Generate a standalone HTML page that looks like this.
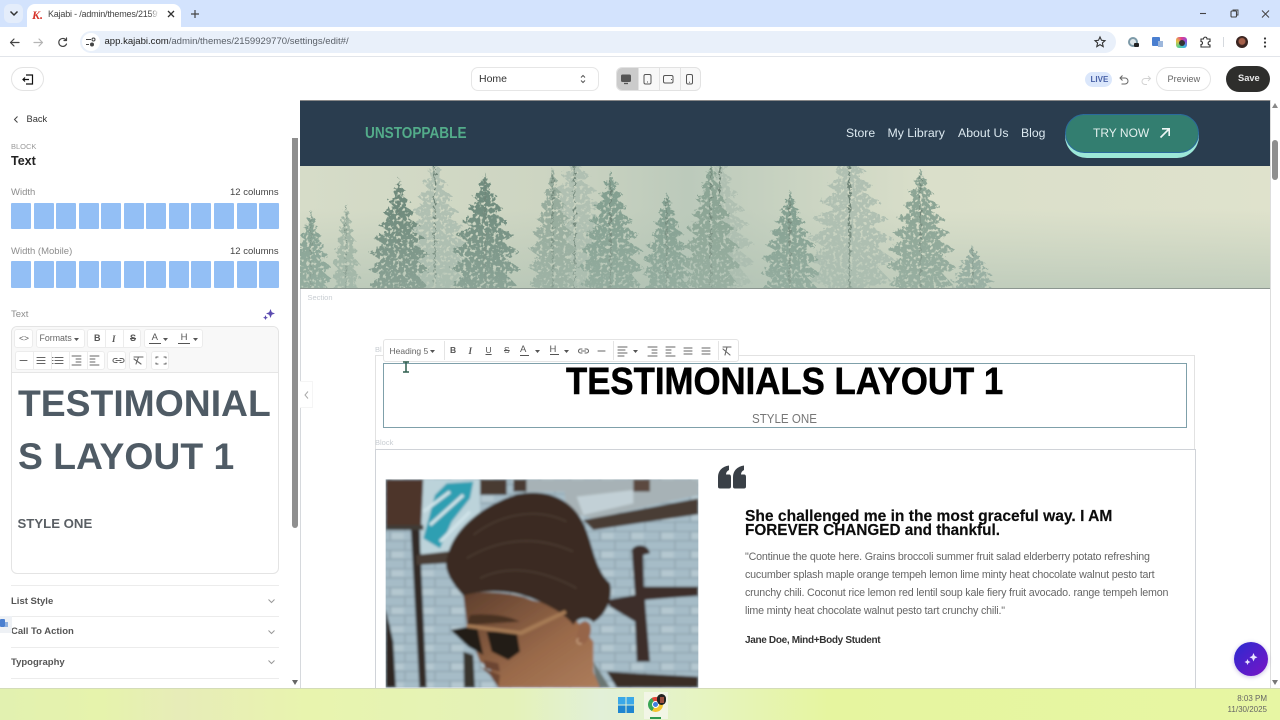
<!DOCTYPE html>
<html><head><meta charset="utf-8"><title>Kajabi</title>
<style>
*{box-sizing:border-box;margin:0;padding:0}
html,body{width:1280px;height:720px;overflow:hidden;background:#fff;font-family:"Liberation Sans",sans-serif}
#r{position:relative;width:1280px;height:720px;overflow:hidden;filter:blur(.25px)}
.a{position:absolute}
.t{position:absolute;white-space:nowrap;line-height:1}
.c{position:absolute;background:#93bff5;border-radius:1px;width:20px;height:26px}
.btn{position:absolute;background:#fff;border:1px solid #ececec;border-radius:3px}
svg{position:absolute;overflow:visible}
.ic{fill:none;stroke:#666;stroke-width:1.1;stroke-linecap:round;stroke-linejoin:round}
.q{left:745px;font-size:10.700px;letter-spacing:-.18px;color:#666}
</style></head><body><div id="r">

<!-- Chrome tab strip -->
<div class="a" style="left:0;top:0;width:1280px;height:27px;background:#d3e3fd"></div>
<div class="a" style="left:4px;top:4px;width:19px;height:19px;border-radius:6px;background:#e4edfb"></div>
<svg style="left:9px;top:10px" width="10" height="7"><path d="M1.5 1.5L5 5L8.5 1.5" fill="none" stroke="#333" stroke-width="1.5"/></svg>
<div class="a" style="left:27px;top:4px;width:154px;height:24px;background:#fff;border-radius:8px 8px 0 0"></div>
<div class="t" style="left:32px;top:8px;font:italic bold 12px 'Liberation Serif',serif;color:#d6332a">K.</div>
<div class="t" style="left:48px;top:9.500px;width:110px;overflow:hidden;font-size:9px;letter-spacing:-.2px;color:#444">Kajabi - /admin/themes/215992</div>
<div class="a" style="left:150px;top:6px;width:9px;height:18px;background:linear-gradient(90deg,rgba(255,255,255,0),#fff)"></div>
<svg style="left:167px;top:10px" width="8" height="8"><path d="M1 1L7 7M7 1L1 7" stroke="#333" stroke-width="1.3"/></svg>
<svg style="left:190px;top:9px" width="10" height="10"><path d="M5 1V9M1 5H9" stroke="#444" stroke-width="1.2"/></svg>
<svg style="left:1199px;top:9px" width="70" height="10"><path d="M1 4.500H7" stroke="#444" stroke-width="1.1"/><rect x="32" y="2" width="5.500" height="6" rx="1" fill="none" stroke="#444" stroke-width="1.1"/><path d="M34 2V1H39V6H37.500" fill="none" stroke="#444" stroke-width=".9"/><path d="M63 1.500L70 8.500M70 1.500L63 8.500" stroke="#444" stroke-width="1"/></svg>

<!-- Toolbar -->
<div class="a" style="left:0;top:27px;width:1280px;height:30px;background:#fff;border-bottom:1px solid #e2e5ea"></div>
<svg style="left:9px;top:37px" width="62" height="11" fill="none" stroke-linecap="round" stroke-linejoin="round"><path d="M10 5.500H1.500M5 2L1.500 5.500L5 9" stroke="#444" stroke-width="1.2"/><path d="M25 5.500H33.500M30 2L33.500 5.500L30 9" stroke="#b5b5b5" stroke-width="1.2"/><path d="M57 3A4 4 0 1 0 57.500 7M57.500 1V3.500H55" stroke="#444" stroke-width="1.2"/></svg>
<div class="a" style="left:80px;top:31px;width:1036px;height:22px;border-radius:11px;background:#e9f0fa"></div>
<div class="a" style="left:82px;top:33px;width:18px;height:18px;border-radius:9px;background:#fff"></div>
<svg style="left:86px;top:37px" width="11" height="10" fill="none" stroke="#444" stroke-width="1"><path d="M0 2.500H5M0 7.500H3"/><circle cx="7.500" cy="2.500" r="1.500"/><circle cx="6" cy="7.500" r="1.500" fill="#444"/></svg>
<div class="t" style="left:104.500px;top:37px;font-size:9.550px;color:#5a6068"><span style="color:#222">app.kajabi.com</span>/admin/themes/2159929770/settings/edit#/</div>
<svg style="left:1094px;top:36px" width="12" height="12"><path d="M6 1L7.500 4.300L11 4.700L8.400 7L9.200 10.600L6 8.700L2.800 10.600L3.600 7L1 4.700L4.500 4.300Z" fill="none" stroke="#333" stroke-width="1.100"/></svg>
<div class="a" style="left:1128px;top:37px;width:10px;height:10px;border-radius:5px;border:2px solid #7d9aa8;background:#dfe7ea"></div>
<div class="a" style="left:1134px;top:43px;width:5px;height:4px;background:#222;border-radius:1px"></div>
<div class="a" style="left:1152px;top:37px;width:8px;height:9px;background:#4a7fd0;border-radius:1px"></div>
<div class="a" style="left:1158px;top:41px;width:5px;height:6px;background:#9db7dc"></div>
<div class="a" style="left:1176px;top:37px;width:11px;height:11px;border-radius:3px;background:conic-gradient(#e23b8f,#8b4fd8,#3fb6e0,#5fd08a,#e8c13f,#e23b8f)"></div>
<div class="a" style="left:1178.500px;top:39.500px;width:6px;height:6px;border-radius:3px;background:#333"></div>
<svg style="left:1200px;top:36px" width="11" height="12"><path d="M1 3H3.500C3.500 .5 7 .5 7 3H10V5.500C7.500 5.500 7.500 9 10 9V11H1V8.500C3 8.500 3 5.500 1 5.500Z" fill="none" stroke="#333" stroke-width="1.100"/></svg>
<div class="a" style="left:1223px;top:37px;width:1px;height:10px;background:#d5d9de"></div>
<div class="a" style="left:1236px;top:36px;width:12px;height:12px;border-radius:6px;background:radial-gradient(circle at 50% 45%,#a5604a 0 32%,#3a2420 45%)"></div>
<svg style="left:1263px;top:37px" width="4" height="11" fill="#333"><circle cx="2" cy="1.500" r="1.100"/><circle cx="2" cy="5.500" r="1.100"/><circle cx="2" cy="9.500" r="1.100"/></svg>

<!-- Editor top bar -->
<div class="a" style="left:11px;top:67px;width:33px;height:24px;border-radius:12px;border:1px solid #e3e3e3;background:#fff"></div>
<svg style="left:22px;top:74px" width="12" height="11" fill="none" stroke="#111" stroke-width="1.200"><path d="M4 1H10.500V10H4M7 5.500H1M3 3.500L1 5.500L3 7.500"/></svg>
<div class="a" style="left:471px;top:67px;width:128px;height:24px;border-radius:7px;border:1px solid #e6e6e6;background:#fff"></div>
<div class="t" style="left:479px;top:73.500px;font-size:10.500px;color:#333">Home</div>
<svg style="left:580px;top:74px" width="6" height="10" fill="none" stroke="#555"><path d="M1 3.500L3 1.500L5 3.500M1 6.500L3 8.500L5 6.500"/></svg>
<div class="a" style="left:616px;top:67px;width:85px;height:24px;border-radius:6px;border:1px solid #e2e2e2;background:#f8f8f8;overflow:hidden">
<div class="a" style="left:0;top:0;width:21px;height:24px;background:#cbcbcb"></div>
<div class="a" style="left:42px;top:0;width:1px;height:24px;background:#e2e2e2"></div>
<div class="a" style="left:21px;top:0;width:1px;height:24px;background:#e2e2e2"></div>
<div class="a" style="left:63px;top:0;width:1px;height:24px;background:#e2e2e2"></div>
</div>
<svg style="left:621px;top:74px" width="74" height="11" fill="none" stroke="#555" stroke-width="1"><rect x=".5" y="1" width="9" height="6.500" rx="1" fill="#555"/><path d="M3 9.500H7" stroke-width="1.300"/><rect x="23" y=".5" width="7" height="9.500" rx="1.500"/><path d="M26 8H27"/><rect x="42.500" y="1.500" width="9.500" height="7.500" rx="1.500"/><path d="M50.500 5V6"/><rect x="65.500" y=".5" width="6" height="9.500" rx="1.500"/><path d="M68 8.300H69"/></svg>
<div class="a" style="left:1085px;top:72px;width:27px;height:15px;border-radius:7.500px;background:#dbe7fb"></div>
<div class="t" style="left:1090.500px;top:75.500px;font-size:8px;font-weight:bold;color:#4a62a8">LIVE</div>
<svg style="left:1119px;top:74px" width="32" height="11" fill="none" stroke-width="1"><path d="M3.500 1.500L1 4L3.500 6.500M1 4H6A3 3 0 0 1 6 10H2.500" stroke="#666"/><path d="M29 2L31.500 4.500L29 7M31.500 4.500H26A3 3 0 0 0 26 10.500H28" stroke="#d3d3d3"/></svg>
<div class="a" style="left:1156px;top:67px;width:55px;height:24px;border-radius:12px;border:1px solid #e4e4e4;background:#fff"></div>
<div class="t" style="left:1167.500px;top:74.500px;font-size:9.200px;color:#666">Preview</div>
<div class="a" style="left:1226px;top:66px;width:44px;height:26px;border-radius:13px;background:#2e2e2c"></div>
<div class="t" style="left:1238px;top:74px;font-size:9.300px;font-weight:bold;color:#e8e8e8">Save</div>

<!-- Left panel -->
<svg style="left:12.500px;top:115px" width="6" height="9"><path d="M4.500 1.500L1.500 4.500L4.500 7.500" fill="none" stroke="#444" stroke-width="1"/></svg>
<div class="t" style="left:26.500px;top:114.500px;font-size:9.300px;color:#333">Back</div>
<div class="t" style="left:11px;top:142.500px;font-size:7.500px;color:#9a9a9a">BLOCK</div>
<div class="t" style="left:11px;top:155px;font-size:12.500px;font-weight:bold;color:#222">Text</div>
<div class="t" style="left:11px;top:188px;font-size:9.500px;color:#8d8d8d">Width</div>
<div class="t" style="left:230px;top:188px;font-size:9.500px;color:#444">12 columns</div>
<div class="t" style="left:11px;top:247px;font-size:9.500px;color:#8d8d8d">Width (Mobile)</div>
<div class="t" style="left:230px;top:247px;font-size:9.500px;color:#444">12 columns</div>
<div class="c" style="left:11px;top:203px"></div><div class="c" style="left:33.600px;top:203px"></div><div class="c" style="left:56.200px;top:203px"></div><div class="c" style="left:78.800px;top:203px"></div><div class="c" style="left:101.400px;top:203px"></div><div class="c" style="left:124px;top:203px"></div><div class="c" style="left:146px;top:203px"></div><div class="c" style="left:168.700px;top:203px"></div><div class="c" style="left:191.300px;top:203px"></div><div class="c" style="left:214px;top:203px"></div><div class="c" style="left:236.700px;top:203px"></div><div class="c" style="left:259.300px;top:203px"></div>
<div class="c" style="left:11px;top:261px;height:27px"></div><div class="c" style="left:33.600px;top:261px;height:27px"></div><div class="c" style="left:56.200px;top:261px;height:27px"></div><div class="c" style="left:78.800px;top:261px;height:27px"></div><div class="c" style="left:101.400px;top:261px;height:27px"></div><div class="c" style="left:124px;top:261px;height:27px"></div><div class="c" style="left:146px;top:261px;height:27px"></div><div class="c" style="left:168.700px;top:261px;height:27px"></div><div class="c" style="left:191.300px;top:261px;height:27px"></div><div class="c" style="left:214px;top:261px;height:27px"></div><div class="c" style="left:236.700px;top:261px;height:27px"></div><div class="c" style="left:259.300px;top:261px;height:27px"></div>

<div class="t" style="left:11px;top:310px;font-size:9.500px;color:#8d8d8d">Text</div>
<svg style="left:263px;top:309px" width="12" height="12" fill="#5b4bb0"><path d="M7.500 0L8.800 3.200L12 4.500L8.800 5.800L7.500 9L6.200 5.800L3 4.500L6.200 3.200Z"/><path d="M2.500 6L3.300 8L5 8.700L3.300 9.400L2.500 11L1.700 9.400L0 8.700L1.700 8Z"/></svg>

<div class="a" style="left:11px;top:326px;width:268px;height:248px;border:1px solid #e4e4e4;border-radius:6px;background:#fff"></div>
<div class="a" style="left:12px;top:327px;width:266px;height:46px;background:#f8f8f8;border-bottom:1px solid #e6e6e6;border-radius:5px 5px 0 0"></div>
<div class="btn" style="left:14px;top:329px;width:19px;height:19px"></div>
<div class="btn" style="left:35.500px;top:329px;width:49px;height:19px"></div>
<div class="btn" style="left:87px;top:329px;width:54px;height:19px"></div>
<div class="btn" style="left:144px;top:329px;width:59px;height:19px"></div>
<div class="btn" style="left:14.500px;top:351px;width:90px;height:19px"></div>
<div class="btn" style="left:107px;top:351px;width:19px;height:19px"></div>
<div class="btn" style="left:129px;top:351px;width:18px;height:19px"></div>
<div class="btn" style="left:150.500px;top:351px;width:18px;height:19px"></div>
<div class="t" style="left:19px;top:334px;font-size:8.500px;color:#555">&lt;&gt;</div>
<div class="t" style="left:39.500px;top:334px;font-size:8.800px;color:#666">Formats</div>
<svg style="left:74px;top:338px" width="5" height="3"><path d="M0 0H5L2.500 3Z" fill="#555"/></svg>
<div class="t" style="left:94px;top:334px;font-size:9px;font-weight:bold;color:#555">B</div>
<div class="t" style="left:112px;top:334px;font:italic bold 9px 'Liberation Serif',serif;color:#555">I</div>
<div class="t" style="left:130px;top:334px;font-size:9px;font-weight:bold;color:#555;text-decoration:line-through">S</div>
<div class="a" style="left:105px;top:329px;width:1px;height:19px;background:#ececec"></div>
<div class="a" style="left:123px;top:329px;width:1px;height:19px;background:#ececec"></div>
<div class="t" style="left:149px;top:333px;font-size:9.500px;color:#555;border-bottom:1.500px solid #555">&nbsp;A&nbsp;</div>
<svg style="left:163px;top:338px" width="5" height="3"><path d="M0 0H5L2.500 3Z" fill="#555"/></svg>
<div class="t" style="left:178px;top:333px;font-size:9.500px;color:#555;border-bottom:1.500px solid #555">&nbsp;H&nbsp;</div>
<svg style="left:193px;top:338px" width="5" height="3"><path d="M0 0H5L2.500 3Z" fill="#555"/></svg>
<div class="a" style="left:33px;top:351px;width:1px;height:19px;background:#ececec"></div>
<div class="a" style="left:51px;top:351px;width:1px;height:19px;background:#ececec"></div>
<div class="a" style="left:69px;top:351px;width:1px;height:19px;background:#ececec"></div>
<div class="a" style="left:87px;top:351px;width:1px;height:19px;background:#ececec"></div>
<svg style="left:14px;top:351px" width="156" height="19" class="ic"><path d="M6 9.500H13"/><path d="M23 6.500H31M23 9.500H31M23 12.500H31M41 6.500H49M41 9.500H49M41 12.500H49M38.500 6.500H39M38.500 9.500H39M38.500 12.500H39"/><path d="M58 5H67M62 8H67M62 11H67M58 14H67M76 5H85M76 8H81M76 11H81M76 14H85" stroke-width=".9"/><path d="M99 9.500A2 2 0 0 1 101 7.500H103M108 7.500H106M108 11.500H106M103 11.500H101A2 2 0 0 1 99 9.500M108 7.500A2 2 0 0 1 108 11.500M102 9.500H107"/><path d="M120 6H129M124.500 6L122 13M120 8L127 13"/><path d="M142 7V6H144M150 6H152V7M142 12V13H144M150 13H152V12"/></svg>

<div class="t" style="left:18px;top:385.400px;font-size:37.300px;font-weight:bold;color:#4f5b65">TESTIMONIAL</div>
<div class="t" style="left:18px;top:438.400px;font-size:37.300px;font-weight:bold;color:#4f5b65">S LAYOUT 1</div>
<div class="t" style="left:17.500px;top:516.800px;font-size:13.200px;font-weight:bold;color:#5a5f64">STYLE ONE</div>

<div class="a" style="left:11px;top:585px;width:268px;height:1px;background:#ececec"></div>
<div class="a" style="left:11px;top:616px;width:268px;height:1px;background:#ececec"></div>
<div class="a" style="left:11px;top:647px;width:268px;height:1px;background:#ececec"></div>
<div class="a" style="left:11px;top:678px;width:268px;height:1px;background:#ececec"></div>
<div class="t" style="left:11px;top:596.500px;font-size:9.500px;font-weight:bold;color:#555">List Style</div>
<div class="t" style="left:11px;top:627px;font-size:9.500px;font-weight:bold;color:#555">Call To Action</div>
<div class="t" style="left:11px;top:658px;font-size:9.500px;font-weight:bold;color:#555">Typography</div>
<svg style="left:268px;top:599px" width="7" height="64" fill="none" stroke="#999" stroke-width="1"><path d="M.5 .5L3.500 3.500L6.500 .5M.5 31.500L3.500 34.500L6.500 31.500M.5 61.500L3.500 64.500L6.500 61.500"/></svg>
<div class="a" style="left:0;top:616px;width:12px;height:17px;background:#eef1f5"></div>
<div class="a" style="left:0;top:619px;width:5px;height:8px;background:#4a7fd0;border-radius:1px"></div>
<div class="a" style="left:5px;top:622px;width:3px;height:5px;background:#8fb0de"></div>

<div class="a" style="left:292px;top:138px;width:6px;height:390px;background:#8f8f8f;border-radius:0 0 3px 3px"></div>
<svg style="left:292px;top:680px" width="6" height="5"><path d="M0 0H6L3 5Z" fill="#666"/></svg>
<div class="a" style="left:300px;top:100px;width:1px;height:588px;background:#d6d9dd"></div>

<!-- Site nav -->
<div class="a" style="left:300px;top:101px;width:970px;height:65px;background:#2a3d4f"></div>
<div class="a" style="left:300px;top:100px;width:970px;height:1px;background:#888"></div>
<div class="t" style="left:365px;top:125.500px;font-size:16px;font-weight:bold;color:#53ac8a;transform:scaleX(.85);transform-origin:0 0">UNSTOPPABLE</div>
<div class="t" style="left:846px;top:126.500px;font-size:12.200px;color:#dce9f0">Store</div>
<div class="t" style="left:887.500px;top:126.500px;font-size:12.300px;color:#dce9f0">My Library</div>
<div class="t" style="left:958px;top:126.500px;font-size:12.300px;color:#dce9f0">About Us</div>
<div class="t" style="left:1021px;top:126.500px;font-size:12.200px;color:#dce9f0">Blog</div>
<div class="a" style="left:1065px;top:114px;width:134px;height:44px;border-radius:22px;background:#9de8d8"></div>
<div class="a" style="left:1065px;top:114px;width:134px;height:39px;border-radius:20px;background:#337e70;border:1.500px solid #2a6a9c"></div>
<div class="t" style="left:1093px;top:127px;font-size:12px;color:#e4f0ee">TRY NOW</div>
<svg style="left:1159px;top:127px" width="12" height="12" fill="none" stroke="#edf6f4" stroke-width="1.600"><path d="M1.500 10.500L10 2M3 1.800H10.200V9"/></svg>

<!-- Forest hero -->
<svg style="left:300px;top:166px;overflow:hidden" width="970" height="123" viewBox="0 0 970 123">
<defs>
<linearGradient id="sky" x1="0" y1="0" x2="1" y2="0"><stop offset="0" stop-color="#d6dcc8"/><stop offset=".25" stop-color="#cdd5c2"/><stop offset=".4" stop-color="#bccabb"/><stop offset=".65" stop-color="#dadfca"/><stop offset="1" stop-color="#dfe2cc"/></linearGradient>
<linearGradient id="bot" x1="0" y1="0" x2="0" y2="1"><stop offset=".35" stop-color="#a9bdaf" stop-opacity="0"/><stop offset="1" stop-color="#a5baae" stop-opacity=".5"/></linearGradient>
<filter id="rg" x="-5%" y="-5%" width="110%" height="110%"><feTurbulence type="fractalNoise" baseFrequency=".3" numOctaves="2" seed="4" result="n"/><feDisplacementMap in="SourceGraphic" in2="n" scale="7" result="d"/><feColorMatrix in="n" type="matrix" values="0 0 0 0 0 0 0 0 0 0 0 0 0 0 0 7 0 0 0 -2.200" result="m"/><feComposite in="d" in2="m" operator="in"/></filter>
<symbol id="tr" viewBox="0 0 100 200" preserveAspectRatio="none"><path d="M50 0L53 14L60 18L55 28L68 36L59 44L76 54L64 62L84 74L68 82L92 94L74 104L98 118L78 128L100 144L80 152L96 170L72 176L84 200L16 200L28 176L4 170L20 152L0 144L22 128L2 118L26 104L8 94L32 82L16 74L36 62L24 54L41 44L32 36L45 28L40 18L47 14Z"/><rect x="48.500" y="10" width="2" height="190" fill="#6f8578"/></symbol>
</defs>
<rect width="970" height="123" fill="url(#sky)"/>
<g fill="#b0c0b2" filter="url(#rg)">
<use href="#tr" x="100" y="-10" width="70" height="150"/>
<use href="#tr" x="235" y="-20" width="80" height="160"/>
<use href="#tr" x="385" y="-15" width="70" height="155"/>
<use href="#tr" x="505" y="-25" width="90" height="165"/>
</g>
<g fill="#84a091" filter="url(#rg)">
<use href="#tr" x="-10" y="44" width="42" height="96"/>
<use href="#tr" x="32" y="36" width="28" height="104" fill="#a3b6a6"/>
<use href="#tr" x="68" y="12" width="62" height="128" fill="#6f8b7d"/>
<use href="#tr" x="150" y="6" width="70" height="134" fill="#718d7f"/>
<use href="#tr" x="228" y="2" width="50" height="138" fill="#97ac9d"/>
<use href="#tr" x="278" y="4" width="66" height="136"/>
<use href="#tr" x="342" y="26" width="50" height="114"/>
<use href="#tr" x="382" y="-6" width="58" height="146" fill="#8ca595"/>
<use href="#tr" x="460" y="24" width="60" height="116"/>
<use href="#tr" x="586" y="2" width="70" height="138" fill="#8ca595"/>
<use href="#tr" x="650" y="80" width="46" height="60" fill="#90a89b"/>
</g>
<rect width="970" height="123" fill="url(#bot)"/>
<rect y="122" width="970" height="1" fill="#8c9690"/>
</svg>

<div class="t" style="left:307.500px;top:293.500px;font-size:7.500px;color:#c8cdd2">Section</div>

<!-- Scrollbar right -->
<div class="a" style="left:1270px;top:100px;width:10px;height:588px;background:#fff;border-left:1px solid #ddd"></div>
<svg style="left:1272px;top:103px" width="6" height="5"><path d="M0 5H6L3 0Z" fill="#888"/></svg>
<div class="a" style="left:1272px;top:140px;width:6px;height:40px;background:#8f8f8f;border-radius:3px"></div>
<svg style="left:1272px;top:680px" width="6" height="5"><path d="M0 0H6L3 5Z" fill="#777"/></svg>

<!-- collapse tab -->
<div class="a" style="left:300px;top:381px;width:13px;height:27px;background:#fff;border:1px solid #f5f5f5;border-left:0"></div>
<svg style="left:304px;top:391px" width="5" height="8"><path d="M4 .5L1 4L4 7.500" fill="none" stroke="#aaa" stroke-width="1"/></svg>

<!-- blocks -->
<div class="a" style="left:375px;top:355px;width:820px;height:94px;border:1px solid #e2e2e2;border-bottom:0"></div>
<div class="t" style="left:375px;top:346px;font-size:7.500px;color:#c8cdd2">Bl</div>
<div class="a" style="left:383px;top:363px;width:804px;height:65px;border:1px solid #7fa0aa"></div>
<div class="t" style="left:375px;top:439px;font-size:7.500px;color:#c8cdd2">Block</div>
<div class="a" style="left:375px;top:449px;width:821px;height:239px;border:1px solid #d0d3d8;border-bottom:0"></div>

<div class="a" style="left:383px;top:339px;width:356px;height:23px;background:#fff;border:1px solid #e4e4e4;border-radius:3px"></div>
<div class="t" style="left:389.500px;top:346.500px;font-size:8.500px;color:#666">Heading 5</div>
<svg style="left:430px;top:349.500px" width="5" height="3"><path d="M0 0H5L2.500 3Z" fill="#555"/></svg>
<div class="a" style="left:444px;top:341px;width:1px;height:19px;background:#e4e4e4"></div>
<div class="a" style="left:613px;top:341px;width:1px;height:19px;background:#e4e4e4"></div>
<div class="a" style="left:718px;top:341px;width:1px;height:19px;background:#e4e4e4"></div>
<div class="t" style="left:450px;top:346px;font-size:8.500px;font-weight:bold;color:#555">B</div>
<div class="t" style="left:468.500px;top:346px;font:italic bold 9px 'Liberation Serif',serif;color:#555">I</div>
<div class="t" style="left:485.500px;top:346px;font-size:8.500px;color:#555;text-decoration:underline">U</div>
<div class="t" style="left:504px;top:346px;font-size:8.500px;color:#555;text-decoration:line-through">S</div>
<div class="t" style="left:520px;top:345px;font-size:9.500px;color:#555;border-bottom:1.200px solid #555">A&nbsp;</div>
<svg style="left:535px;top:350px" width="5" height="3"><path d="M0 0H5L2.500 3Z" fill="#555"/></svg>
<div class="t" style="left:549.500px;top:344.500px;font-size:9.500px;color:#555;border-bottom:1.200px solid #555">H&nbsp;</div>
<svg style="left:564px;top:350px" width="5" height="3"><path d="M0 0H5L2.500 3Z" fill="#555"/></svg>
<svg style="left:578px;top:343px" width="152" height="16" class="ic"><path d="M4 6H2.500A2 2 0 0 0 2.500 10H4M7 6H8.500A2 2 0 0 1 8.500 10H7M3.500 8H7.500"/><path d="M20 8H27"/><path d="M40 4H49M40 7H47M40 10H49M40 13H46"/><path d="M70 4H79M74 7H79M74 10H79M70 13H79M88 4H97M88 7H93M88 10H93M88 13H97"/><path d="M106 5H114M106 8H114M106 11H114M124 5H132M124 8H132M124 11H132"/><path d="M145 4H153M149 4L147 12M145 6L152 12"/></svg>
<svg style="left:633px;top:350px" width="5" height="3"><path d="M0 0H5L2.500 3Z" fill="#555"/></svg>

<svg style="left:402px;top:361px" width="8" height="12" fill="none" stroke="#2f5e4e" stroke-width="1.500"><path d="M1 1H7M4 1V11M1 11H7"/></svg>

<div class="t" style="left:566px;top:363.300px;font-size:38px;font-weight:bold;color:#000;-webkit-text-stroke:.5px #000;transform:scaleX(.915);transform-origin:0 0">TESTIMONIALS LAYOUT 1</div>
<div class="t" style="left:752px;top:412px;font-size:13px;color:#777;transform:scaleX(.89);transform-origin:0 0">STYLE ONE</div>

<!-- Photo -->
<svg style="left:380px;top:475px" width="330" height="215" viewBox="0 0 990 645">
<defs>
<clipPath id="ph"><rect x="17" y="13" width="938" height="625"/></clipPath>
<pattern id="bk" width="90" height="56" patternUnits="userSpaceOnUse"><rect width="90" height="56" fill="#a6bcc7"/><path d="M0 1H90M0 29H90M30 1V29M75 29V56" stroke="#6c808a" stroke-width="3" opacity=".55"/><rect x="35" y="6" width="36" height="18" fill="#bccdd5" opacity=".7"/></pattern>
<linearGradient id="sk" x1="0" y1="0" x2="1" y2="1"><stop offset="0" stop-color="#5f3f2d"/><stop offset=".6" stop-color="#9a6a4a"/><stop offset="1" stop-color="#ad7d5c"/></linearGradient>
<filter id="b2" x="-5%" y="-5%" width="110%" height="110%"><feGaussianBlur stdDeviation="4"/></filter>
</defs>
<g clip-path="url(#ph)"><g filter="url(#b2)">
<rect x="0" y="0" width="990" height="645" fill="url(#bk)"/>
<path d="M17 13H130V150H17Z" fill="#4e342c"/>
<path d="M130 13H300V180L210 235L120 235Z" fill="#bcd3da"/>
<path d="M130 190L165 60L200 25L280 20L270 70L215 140L180 220Z" fill="#2f9fb2"/>
<path d="M150 150L250 60M130 110L210 50M180 200L270 110" stroke="#cfe3e8" stroke-width="10"/>
<path d="M300 13H380V60H300ZM400 13H440V50H400Z" fill="#4a3a32"/>
<path d="M440 13H560V50H440ZM550 13H955V60L640 130L560 110Z" fill="#a7b2b6"/>
<path d="M590 65L760 45L760 85L610 120Z" fill="#c2d0d6"/>
<path d="M760 13H810V50H760Z" fill="#5c4a40"/>
<path d="M610 135L955 70V118L640 165Z" fill="#4a3c34"/>
<path d="M92 150L118 150L140 638H118Z" fill="#332a26"/>
<path d="M17 150H130V165H17Z" fill="#3f3a36"/>
<path d="M110 240L240 225V262L110 270Z" fill="#4a3c34"/>
<path d="M17 400L40 500L48 638H17Z" fill="#2d2724"/>
<path d="M250 530L280 540L285 638H252Z" fill="#39342f"/>
<path d="M755 225C765 205 805 205 810 235L790 240L792 335L955 335V362L795 375L810 560L770 560L765 440L690 395L680 375L765 360Z" fill="#3c2f2a"/>
<path d="M680 590L955 605V638H710Z" fill="#3a2d28"/>
<path d="M640 560L690 638H650Z" fill="#6b7472"/>
<path d="M250 360C300 345 400 350 455 375L560 400L640 500L640 590L660 638H355L330 580L300 560L262 460Z" fill="url(#sk)"/>
<path d="M300 575L360 600L355 638L330 600Z" fill="#6e4630"/>
<path d="M600 445C620 430 640 445 630 480C620 510 600 515 585 500Z" fill="#96654a"/>
<path d="M198 270C205 170 300 95 410 58C510 38 575 80 605 135C640 200 640 280 690 325C700 365 680 420 640 442C620 420 590 430 580 450C560 420 500 385 440 365C380 345 310 345 250 362C225 335 200 300 198 270Z" fill="#3b2b24"/>
<path d="M280 180C370 110 480 100 560 140M260 250C360 190 470 180 580 230M300 310C380 270 480 280 590 340" stroke="#4c3a30" stroke-width="5" fill="none"/>
<path d="M270 420C320 415 380 420 420 440L260 450Z" fill="#4a3224"/>
<path d="M212 465L290 450L310 540L265 515Z" fill="#231c18"/>
<path d="M320 470L410 470L420 530L385 555L335 530Z" fill="#231c18"/>
<path d="M260 447L420 468L555 405L560 415L425 480L260 458Z" fill="#a67a55"/>
<path d="M310 555L355 565L360 590L315 580Z" fill="#6c4531"/>
<path d="M595 490A8 8 0 1 0 605 505" stroke="#d9b48f" stroke-width="3" fill="none"/>
</g></g>
</svg>

<!-- Testimonial -->
<svg style="left:718px;top:465px" width="28" height="24" viewBox="0 0 28 24" fill="#3a4047"><path d="M0 12C0 6 4 1.500 11 .5V5C9 6 8 7.500 8 9.500H11C12.500 9.500 13 10.500 13 12V21.500C13 23 12 23.500 11 23.500H2C.8 23.500 0 23 0 21.500Z"/><path d="M15 12C15 6 19 1.500 26 .5V5C24 6 23 7.500 23 9.500H26C27.500 9.500 28 10.500 28 12V21.500C28 23 27 23.500 26 23.500H17C15.800 23.500 15 23 15 21.500Z"/></svg>
<div class="t" style="left:745px;top:508.500px;font-size:15.600px;font-weight:bold;color:#0c0c0c;-webkit-text-stroke:.15px #000">She challenged me in the most graceful way. I AM</div>
<div class="t" style="left:745px;top:522.500px;font-size:15.300px;font-weight:bold;color:#0c0c0c;-webkit-text-stroke:.15px #000">FOREVER CHANGED and thankful.</div>
<div class="t q" style="top:552px">"Continue the quote here. Grains broccoli summer fruit salad elderberry potato refreshing</div>
<div class="t q" style="top:570px">cucumber splash maple orange tempeh lemon lime minty heat chocolate walnut pesto tart</div>
<div class="t q" style="top:588px">crunchy chili. Coconut rice lemon red lentil soup kale fiery fruit avocado. range tempeh lemon</div>
<div class="t q" style="top:606px">lime minty heat chocolate walnut pesto tart crunchy chili."</div>
<div class="t" style="left:745px;top:636px;font-size:10px;letter-spacing:-.33px;font-weight:bold;color:#333">Jane Doe, Mind+Body Student</div>

<!-- FAB -->
<div class="a" style="left:1234px;top:642px;width:34px;height:34px;border-radius:17px;background:linear-gradient(135deg,#2a2ad0,#7a14c6);box-shadow:0 1px 4px rgba(60,30,160,.3)"></div>
<svg style="left:1244px;top:652px" width="14" height="14" fill="#e8e4ff"><path d="M9.500 1L10.800 4L13.500 5.200L10.800 6.500L9.500 9.500L8.200 6.500L5.500 5.200L8.200 4Z"/><path d="M3.500 7L4.400 9L6.500 10L4.400 11L3.500 13L2.600 11L.5 10L2.600 9Z"/></svg>

<!-- Taskbar -->
<div class="a" style="left:0;top:688px;width:1280px;height:32px;background:linear-gradient(90deg,#e2f1b0 0,#e6f3ac 8%,#e7ecb8 14%,#e8f4ae 24%,#e4f2b8 40%,#e2f0d8 47%,#e6f4c0 55%,#e6f59f 65%,#e7f6a3 100%);border-top:1px solid #d4dcb8"></div>
<svg style="left:618px;top:697px" width="16" height="16" fill="#2f9ce0"><rect width="7.500" height="7.500" fill="#3aa8e8"/><rect x="8.500" width="7.500" height="7.500" fill="#3aa8e8"/><rect y="8.500" width="7.500" height="7.500" fill="#1f86d0"/><rect x="8.500" y="8.500" width="7.500" height="7.500" fill="#1f86d0"/></svg>
<div class="a" style="left:644px;top:692px;width:24px;height:27px;background:#f2f6e6"></div>
<div class="a" style="left:648px;top:697px;width:15px;height:15px;border-radius:8px;background:conic-gradient(from -30deg,#e0483a 0 33%,#f2c531 33% 66%,#3aa655 66%)"></div>
<div class="a" style="left:652px;top:701px;width:7px;height:7px;border-radius:4px;background:#3f7fe0;border:1px solid #fff"></div>
<div class="a" style="left:657px;top:694px;width:9px;height:11px;border-radius:5px;background:#222"></div>
<div class="a" style="left:659.500px;top:696.500px;width:4px;height:6px;background:#9a5040"></div>
<div class="a" style="left:650px;top:717px;width:11px;height:2px;background:#2f9a50"></div>
<div class="t" style="left:1220px;width:47px;text-align:right;top:695px;font-size:8px;color:#666">8:03 PM</div>
<div class="t" style="left:1220px;width:47px;text-align:right;top:706px;font-size:8px;color:#666">11/30/2025</div>

</div></body></html>
